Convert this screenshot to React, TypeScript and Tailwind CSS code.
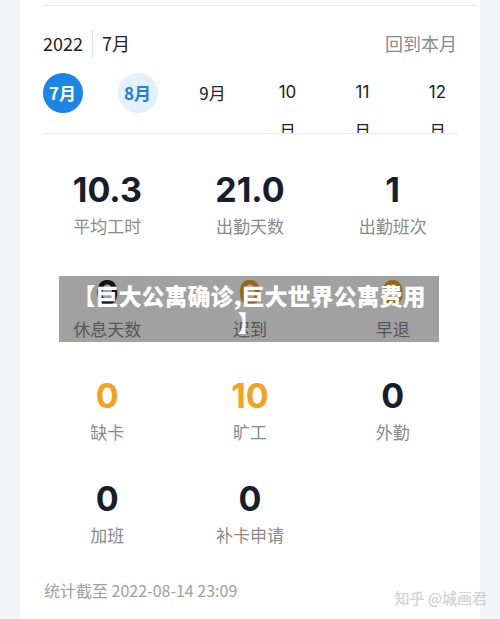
import type { ReactNode } from 'react'

const cjk = { fontFamily: '"Noto Sans CJK SC", "Noto Sans", sans-serif' }
const num = { fontFamily: 'Inter, "Noto Sans CJK SC", sans-serif' }

type Stat = { value: string; label: string; tone?: 'warn' }

const rows: Stat[][] = [
  [
    { value: '10.3', label: '平均工时' },
    { value: '21.0', label: '出勤天数' },
    { value: '1', label: '出勤班次' },
  ],
  [
    { value: '0', label: '休息天数' },
    { value: '0', label: '迟到', tone: 'warn' },
    { value: '0', label: '早退', tone: 'warn' },
  ],
  [
    { value: '0', label: '缺卡', tone: 'warn' },
    { value: '10', label: '旷工', tone: 'warn' },
    { value: '0', label: '外勤' },
  ],
  [
    { value: '0', label: '加班' },
    { value: '0', label: '补卡申请' },
  ],
]

function MonthCell({ children }: { children: ReactNode }) {
  return <div className="flex flex-col items-center">{children}</div>
}

export default function App() {
  return (
    <div className="relative h-[619px] w-[500px] overflow-hidden bg-[#f4f5f7]" style={cjk}>
      <div className="mx-[20px] h-full bg-white px-[24px]">
        <div className="mr-[-20px] h-[6px] border-b border-[#ebebeb]" />

        {/* 年月 + 回到本月 */}
        <div className="mt-[9px] flex h-[56px] items-center text-[18px] text-[#222]">
          <span className="-ml-px">2022</span>
          <span className="ml-[9px] mr-[9px] h-[29px] w-px bg-[#e6e6e6]" />
          <span>7月</span>
          <span className="ml-auto mr-[-1px] text-[#8a8a8a]">回到本月</span>
        </div>

        {/* 月份选择 */}
        <div className="mr-[-2px] border-b border-[#ececec]">
          <div className="-ml-[19px] mr-[-17px] grid h-[62px] grid-cols-6 overflow-hidden pt-[2px] text-[17px] text-[#222]">
            <MonthCell>
              <span className="flex h-[40px] w-[40px] items-center justify-center rounded-full bg-[#1b86e8] font-bold text-white">
                7月
              </span>
            </MonthCell>
            <MonthCell>
              <span className="flex h-[40px] w-[40px] items-center justify-center rounded-full bg-[#e4f0fc] font-bold text-[#1b7fdc]">
                8月
              </span>
            </MonthCell>
            <MonthCell>
              <span className="flex h-[40px] items-center">9月</span>
            </MonthCell>
            {['10', '11', '12'].map((m) => (
              <MonthCell key={m}>
                <span className="flex h-[40px] items-center" style={num}>{m}</span>
                <span className="mt-[5px] leading-[26px]">月</span>
              </MonthCell>
            ))}
          </div>
        </div>

        {/* 统计 */}
        <div className="-mx-[8px] mt-[36px] flex flex-col gap-[35px]">
          {rows.map((row, i) => (
            <div key={i} className="grid grid-cols-3">
              {row.map((s) => (
                <div key={s.label} className="flex flex-col items-center gap-[4px]">
                  <span
                    style={num}
                    className={`text-[34px] font-bold leading-[40px] ${s.tone === 'warn' ? 'text-[#f2a21c]' : 'text-[#17202a]'}`}
                  >
                    {s.value}
                  </span>
                  <span className="text-[17px] leading-[24px] text-[#8a8a8a]">{s.label}</span>
                </div>
              ))}
            </div>
          ))}
        </div>

        <p className="mt-[31px] text-[16px] leading-[24px] text-[#a0a0a0]">统计截至 2022-08-14 23:09</p>
      </div>

      {/* 标题横幅 */}
      <div className="absolute left-[59px] top-[276px] h-[66px] w-[380px] whitespace-nowrap bg-[rgba(0,0,0,0.37)] pt-[6px] text-center text-[23px] font-black leading-[27px] text-white">
        【巨大公寓确诊,巨大世界公寓费用
        <br />】
      </div>

      {/* 水印 */}
      <span className="absolute bottom-[10px] right-[13px] text-[15px] text-[#d4d4d4] [text-shadow:0_0_1px_rgba(0,0,0,0.15)]">
        知乎 @城画君
      </span>
    </div>
  )
}
